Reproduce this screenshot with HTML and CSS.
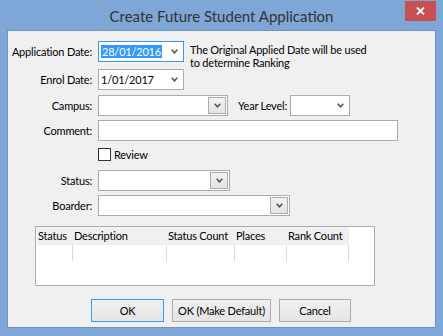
FILE: index.html
```html
<!DOCTYPE html>
<html>
<head>
<meta charset="utf-8">
<link rel="stylesheet" href="styles.css">
</head>
<body>
<div class="window">
  <div class="titlebar">
    <span class="title">Create Future Student Application</span>
    <button class="close" aria-label="Close">
      <svg width="9" height="8" viewBox="0 0 9 8"><path d="M1 0.5 L8 7.5 M8 0.5 L1 7.5" stroke="#fff" stroke-width="1.8" fill="none"/></svg>
    </button>
  </div>
  <div class="client">
    <div class="row row-app">
      <span class="lbl">Application Date:</span>
      <div class="combo combo-date focused">
        <span class="val sel">28/01/2016</span>
        <svg class="chev" width="7" height="5" viewBox="0 0 7 5"><path d="M0.7 0.8 L3.5 3.8 L6.3 0.8" stroke="#555" stroke-width="1.6" fill="none"/></svg>
      </div>
      <p class="note">The Original Applied Date will be used<br>to determine Ranking</p>
    </div>
    <div class="row row-enrol">
      <span class="lbl">Enrol Date:</span>
      <div class="combo combo-date">
        <span class="val">1/01/2017</span>
        <svg class="chev" width="7" height="5" viewBox="0 0 7 5"><path d="M0.7 0.8 L3.5 3.8 L6.3 0.8" stroke="#555" stroke-width="1.6" fill="none"/></svg>
      </div>
    </div>
    <div class="row row-campus">
      <span class="lbl">Campus:</span>
      <div class="combo combo-campus">
        <span class="dropbtn"><svg width="7" height="5" viewBox="0 0 7 5"><path d="M0.7 0.8 L3.5 3.8 L6.3 0.8" stroke="#555" stroke-width="1.6" fill="none"/></svg></span>
      </div>
      <span class="lbl-year">Year Level:</span>
      <div class="combo combo-year">
        <svg class="chev" width="7" height="5" viewBox="0 0 7 5"><path d="M0.7 0.8 L3.5 3.8 L6.3 0.8" stroke="#555" stroke-width="1.6" fill="none"/></svg>
      </div>
    </div>
    <div class="row row-comment">
      <span class="lbl">Comment:</span>
      <div class="textbox"></div>
    </div>
    <div class="check-row">
      <span class="checkbox"></span>
      <span class="check-label">Review</span>
    </div>
    <div class="row row-status">
      <span class="lbl">Status:</span>
      <div class="combo combo-status">
        <span class="dropbtn"><svg width="7" height="5" viewBox="0 0 7 5"><path d="M0.7 0.8 L3.5 3.8 L6.3 0.8" stroke="#555" stroke-width="1.6" fill="none"/></svg></span>
      </div>
    </div>
    <div class="row row-boarder">
      <span class="lbl">Boarder:</span>
      <div class="combo combo-boarder">
        <span class="dropbtn"><svg width="7" height="5" viewBox="0 0 7 5"><path d="M0.7 0.8 L3.5 3.8 L6.3 0.8" stroke="#555" stroke-width="1.6" fill="none"/></svg></span>
      </div>
    </div>
    <div class="listview">
      <div class="lv-head">
        <span class="c c1">Status</span>
        <span class="c c2">Description</span>
        <span class="c c3">Status Count</span>
        <span class="c c4">Places</span>
        <span class="c c5">Rank Count</span>
      </div>
      <div class="lv-seps">
        <span class="s c1"></span>
        <span class="s c2"></span>
        <span class="s c3"></span>
        <span class="s c4"></span>
        <span class="s c5"></span>
      </div>
    </div>
    <div class="buttons">
      <button class="btn btn-ok">OK</button>
      <button class="btn btn-default">OK (Make Default)</button>
      <button class="btn btn-cancel">Cancel</button>
    </div>
  </div>
</div>
</body>
</html>
```
FILE: styles.css
```css
* { box-sizing: border-box; }
html, body { margin: 0; padding: 0; }
body {
  background: #7ea6d6;
  font-family: Lato, "Liberation Sans", sans-serif;
  font-size: 11px;
  letter-spacing: -0.2px;
  color: #000;
}
.window {
  position: relative;
  width: 443px;
  height: 336px;
  background: #7ea6d6;
}
.titlebar {
  height: 30px;
  display: flex;
  align-items: center;
  justify-content: center;
}
.title {
  font-size: 15px;
  letter-spacing: 0;
  color: #333;
  padding-top: 1px;
  white-space: nowrap;
}
.close {
  position: absolute;
  top: 1px;
  left: 405px;
  width: 31px;
  height: 20px;
  padding: 0;
  border: 0;
  background: #c75050;
  display: flex;
  align-items: center;
  justify-content: center;
}
.client {
  margin: 0 7px;
  height: 298px;
  background: #f0f0f0;
  border: 1px solid #6d92c2;
  padding-top: 10px;
}
.row {
  display: flex;
  align-items: center;
  height: 21px;
}
.lbl {
  width: 90px;
  flex: none;
  text-align: right;
  padding-right: 6px;
  line-height: 21px;
  white-space: nowrap;
}
.combo {
  height: 21px;
  border: 1px solid #acacac;
  background: #fff;
  display: flex;
  align-items: center;
  flex: none;
}
.combo.focused { border-color: #3399ff; }
.combo-date { width: 86px; }
.val { margin-left: 2px; line-height: 13px; white-space: nowrap; }
.sel { background: #3399ff; color: #fff; padding: 0 1px; }
.chev { margin-left: auto; margin-right: 5px; }
.row-app { align-items: flex-start; }
.note {
  margin: 2px 0 0 6px;
  line-height: 13px;
  white-space: nowrap;
}
.row-enrol { margin-top: 7px; }
.row-campus { margin-top: 5px; }
.combo-campus { width: 130px; padding: 1px; justify-content: flex-end; }
.combo-status { width: 132px; padding: 1px; justify-content: flex-end; }
.combo-boarder { width: 192px; padding: 1px; justify-content: flex-end; }
.dropbtn {
  width: 18px;
  height: 17px;
  border: 1px solid #acacac;
  background: linear-gradient(#f2f2f2, #e3e3e3);
  display: flex;
  align-items: center;
  justify-content: center;
}
.lbl-year {
  width: 62px;
  flex: none;
  text-align: right;
  padding-right: 3px;
  white-space: nowrap;
}
.combo-year { width: 60px; }
.row-comment { margin-top: 4px; }
.textbox {
  width: 300px;
  height: 21px;
  border: 1px solid #acacac;
  background: #fff;
}
.check-row {
  display: flex;
  align-items: center;
  height: 13px;
  margin: 7px 0 0 90px;
}
.checkbox {
  width: 13px;
  height: 13px;
  border: 1px solid #333;
  background: #fff;
}
.check-label { margin-left: 3px; }
.row-status { margin-top: 9px; }
.row-boarder { margin-top: 4px; }
.listview {
  margin: 10px 0 0 27px;
  width: 340px;
  height: 60px;
  border: 1px solid #acacac;
  background: #fff;
  padding-left: 1px;
}
.lv-head, .lv-seps { display: flex; }
.lv-head {
  height: 18px;
  line-height: 18px;
  background: #f0f0f0;
  width: 312px;
}
.lv-head .c { padding-left: 1px; white-space: nowrap; overflow: hidden; }
.c1 { width: 36px; flex: none; }
.c2 { width: 94px; flex: none; }
.c3 { width: 68px; flex: none; }
.c4 { width: 52px; flex: none; }
.c5 { width: 62px; flex: none; }
.lv-seps { height: 16px; }
.lv-seps .s { border-right: 1px solid #d9d9d9; }
.buttons {
  display: flex;
  gap: 8px;
  margin: 13px 0 0 83px;
}
.btn {
  height: 23px;
  border: 1px solid #acacac;
  background: linear-gradient(#f0f0f0, #e5e5e5);
  font-family: inherit;
  font-size: 11px;
  letter-spacing: -0.2px;
  color: #000;
  padding: 0;
  white-space: nowrap;
}
.btn-ok { width: 73px; border-color: #3c9af0; }
.btn-default { width: 99px; }
.btn-cancel { width: 72px; }
```
